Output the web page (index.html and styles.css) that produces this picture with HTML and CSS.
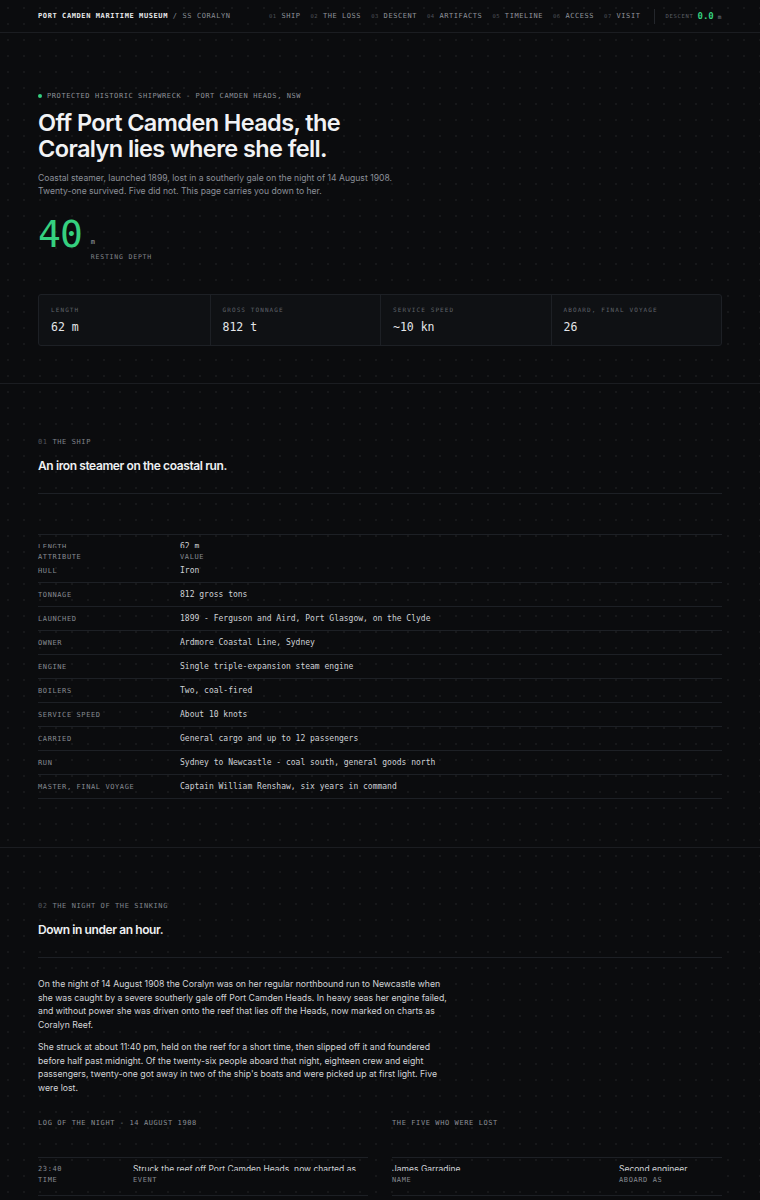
FILE: index.html
```html
<!DOCTYPE html>
<html lang="en">
<head>
    <meta charset="UTF-8">
    <meta name="viewport" content="width=device-width, initial-scale=1.0">
    <title>SS Coralyn - Port Camden Maritime Museum</title>
    <link rel="stylesheet" href="styles.css">
</head>
<body>
    <!-- Barra superior -->
    <header class="topbar">
        <div class="brand"><b>PORT CAMDEN MARITIME MUSEUM</b> / SS CORALYN</div>
        <nav class="links">
            <a href="#ship"><i>01</i> SHIP</a>
            <a href="#loss"><i>02</i> THE LOSS</a>
            <a href="#descent"><i>03</i> DESCENT</a>
            <a href="#artifacts"><i>04</i> ARTIFACTS</a>
            <a href="#timeline"><i>05</i> TIMELINE</a>
            <a href="#access"><i>06</i> ACCESS</a>
            <a href="#visit"><i>07</i> VISIT</a>
            <div class="gauge"><span>DESCENT</span> <strong>0.0</strong> <em>m</em></div>
        </nav>
    </header>

    <!-- Hero -->
    <section class="hero">
        <p class="tag"><span class="dot"></span>PROTECTED HISTORIC SHIPWRECK - PORT CAMDEN HEADS, NSW</p>
        <h1>Off Port Camden Heads, the<br>Coralyn lies where she fell.</h1>
        <p class="lede">Coastal steamer, launched 1899, lost in a southerly gale on the night of 14 August 1908.<br>Twenty-one survived. Five did not. This page carries you down to her.</p>

        <div class="depth">
            <div class="depth-num">40</div>
            <div class="depth-unit">
                <span>m</span>
                <small>RESTING DEPTH</small>
            </div>
        </div>

        <div class="stats">
            <div class="stat"><small>LENGTH</small><span>62 m</span></div>
            <div class="stat"><small>GROSS TONNAGE</small><span>812 t</span></div>
            <div class="stat"><small>SERVICE SPEED</small><span>~10 kn</span></div>
            <div class="stat"><small>ABOARD, FINAL VOYAGE</small><span>26</span></div>
        </div>
    </section>

    <!-- 01 El barco -->
    <section class="block" id="ship">
        <p class="kicker"><i>01</i> THE SHIP</p>
        <h2>An iron steamer on the coastal run.</h2>

        <div class="sheet spec">
            <div class="sheet-head"><span>ATTRIBUTE</span><span>VALUE</span></div>
            <div class="sheet-row"><span>LENGTH</span><span>62 m</span></div>
            <div class="sheet-row"><span>HULL</span><span>Iron</span></div>
            <div class="sheet-row"><span>TONNAGE</span><span>812 gross tons</span></div>
            <div class="sheet-row"><span>LAUNCHED</span><span>1899 - Ferguson and Aird, Port Glasgow, on the Clyde</span></div>
            <div class="sheet-row"><span>OWNER</span><span>Ardmore Coastal Line, Sydney</span></div>
            <div class="sheet-row"><span>ENGINE</span><span>Single triple-expansion steam engine</span></div>
            <div class="sheet-row"><span>BOILERS</span><span>Two, coal-fired</span></div>
            <div class="sheet-row"><span>SERVICE SPEED</span><span>About 10 knots</span></div>
            <div class="sheet-row"><span>CARRIED</span><span>General cargo and up to 12 passengers</span></div>
            <div class="sheet-row"><span>RUN</span><span>Sydney to Newcastle - coal south, general goods north</span></div>
            <div class="sheet-row"><span>MASTER, FINAL VOYAGE</span><span>Captain William Renshaw, six years in command</span></div>
        </div>
    </section>

    <!-- 02 La noche del hundimiento -->
    <section class="block" id="loss">
        <p class="kicker"><i>02</i> THE NIGHT OF THE SINKING</p>
        <h2>Down in under an hour.</h2>

        <div class="story">
            <p>On the night of 14 August 1908 the Coralyn was on her regular northbound run to Newcastle when she was caught by a severe southerly gale off Port Camden Heads. In heavy seas her engine failed, and without power she was driven onto the reef that lies off the Heads, now marked on charts as Coralyn Reef.</p>
            <p>She struck at about 11:40 pm, held on the reef for a short time, then slipped off it and foundered before half past midnight. Of the twenty-six people aboard that night, eighteen crew and eight passengers, twenty-one got away in two of the ship's boats and were picked up at first light. Five were lost.</p>
        </div>

        <div class="pair">
            <div>
                <p class="caption">LOG OF THE NIGHT - 14 AUGUST 1908</p>
                <div class="sheet log">
                    <div class="sheet-head"><span>TIME</span><span>EVENT</span></div>
                    <div class="sheet-row"><span>23:40</span><span>Struck the reef off Port Camden Heads, now charted as Coralyn Reef.</span></div>
                </div>
            </div>
            <div>
                <p class="caption">THE FIVE WHO WERE LOST</p>
                <div class="sheet lost">
                    <div class="sheet-head"><span>NAME</span><span>ABOARD AS</span></div>
                    <div class="sheet-row"><span>James Garradine</span><span>Second engineer</span></div>
                </div>
            </div>
        </div>
    </section>
</body>
</html>
```

FILE: styles.css
```css
body {
    margin: 0;
    background-color: #0b0c0e;
    background-image: radial-gradient(rgba(255, 255, 255, 0.05) 1px, transparent 1.2px);
    background-size: 16px 16px;
    color: #e6e7ea;
    font-family: Inter, "Noto Sans", sans-serif;
}
i, em {
    font-style: normal;
}
p {
    margin: 0;
}

/* barra superior */
.topbar {
    height: 32px;
    padding: 0 38px;
    display: flex;
    align-items: center;
    justify-content: space-between;
    border-bottom: 1px solid #1b1d21;
    font-family: "DejaVu Sans Mono", monospace;
    font-size: 7px;
    letter-spacing: 0.6px;
    color: #8a8e95;
}
.brand b {
    color: #e8e9eb;
    font-weight: bold;
}
.links {
    display: flex;
    align-items: center;
    gap: 10px;
}
.links a {
    color: #8f939a;
    text-decoration: none;
    letter-spacing: 0.55px;
}
.links a i {
    font-size: 5.5px;
    color: #4c5057;
}
.gauge {
    margin-left: 4px;
    padding-left: 10px;
    border-left: 1px solid #24272c;
    height: 15px;
    display: flex;
    align-items: center;
    gap: 4px;
}
.gauge span {
    font-size: 5.5px;
    color: #5d6168;
    letter-spacing: 0.7px;
}
.gauge strong {
    font-size: 9px;
    color: #35d07f;
    letter-spacing: 0;
}
.gauge em {
    font-size: 6px;
    color: #7d8188;
}

/* hero */
.hero {
    padding: 59px 38px 37px;
    border-bottom: 1px solid #1b1d21;
}
.tag {
    display: flex;
    align-items: center;
    gap: 5px;
    font-family: "DejaVu Sans Mono", monospace;
    font-size: 7px;
    letter-spacing: 0.58px;
    color: #8d9198;
}
.dot {
    width: 4px;
    height: 4px;
    border-radius: 50%;
    background: #35d07f;
}
h1 {
    margin: 10px 0 0;
    font-size: 23.5px;
    line-height: 26px;
    font-weight: 600;
    letter-spacing: -0.6px;
    color: #f1f2f4;
}
.lede {
    margin-top: 10px;
    font-size: 8.6px;
    line-height: 13px;
    color: #8b9099;
}
.depth {
    margin-top: 16px;
    display: flex;
    align-items: flex-start;
    gap: 9px;
}
.depth-num {
    font-family: "DejaVu Sans Mono", monospace;
    font-size: 38px;
    line-height: 40px;
    letter-spacing: -1px;
    color: #35d07f;
}
.depth-unit {
    display: flex;
    flex-direction: column;
    padding-top: 24px;
    font-family: "DejaVu Sans Mono", monospace;
}
.depth-unit span {
    font-size: 7px;
    color: #a3a7ad;
}
.depth-unit small {
    margin-top: 7px;
    font-size: 6.5px;
    letter-spacing: 0.8px;
    color: #80848b;
}
.stats {
    margin-top: 33px;
    display: grid;
    grid-template-columns: repeat(4, 1fr);
    border: 1px solid #1d2025;
    border-radius: 3px;
    background: #0f1114;
}
.stat {
    padding: 11px 12px 11px;
    display: flex;
    flex-direction: column;
    gap: 7px;
    font-family: "DejaVu Sans Mono", monospace;
}
.stat + .stat {
    border-left: 1px solid #1d2025;
}
.stat small {
    font-size: 6px;
    letter-spacing: 1.1px;
    color: #5f636a;
}
.stat span {
    font-size: 11.5px;
    color: #e4e6e9;
}

/* secciones */
.block {
    padding: 54px 38px 48px;
    border-bottom: 1px solid #1b1d21;
}
.kicker {
    font-family: "DejaVu Sans Mono", monospace;
    font-size: 7px;
    letter-spacing: 0.6px;
    color: #7f838a;
}
.kicker i {
    color: #4f535a;
}
h2 {
    margin: 12px 0 0;
    padding-bottom: 19px;
    border-bottom: 1px solid #1d2025;
    font-size: 12px;
    line-height: 16px;
    font-weight: 600;
    letter-spacing: -0.4px;
    color: #eef0f2;
}

/* tablas */
.sheet {
    position: relative;
    border-top: 1px solid #1d2025;
    font-family: "DejaVu Sans Mono", monospace;
}
.spec {
    margin-top: 40px;
}
.sheet-row,
.sheet-head {
    display: grid;
    grid-template-columns: 142px 1fr;
    align-items: center;
}
.sheet-row {
    height: 23px;
    border-bottom: 1px solid #1d2025;
}
.sheet-row span:first-child {
    font-size: 7px;
    letter-spacing: 0.6px;
    color: #868a91;
}
.sheet-row span:last-child {
    font-size: 8px;
    color: #cfd2d6;
}
/* cabecera encima de la primera fila */
.sheet-head {
    position: absolute;
    top: 13px;
    left: 0;
    right: 0;
    height: 18px;
    background: #0b0c0e;
    font-size: 7px;
    letter-spacing: 0.6px;
    color: #868a91;
}

.story {
    margin-top: 20px;
    max-width: 410px;
    font-size: 8.7px;
    line-height: 13.7px;
    color: #d3d5d9;
}
.story p + p {
    margin-top: 8px;
}
.pair {
    margin-top: 23px;
    display: grid;
    grid-template-columns: 1fr 1fr;
    gap: 24px;
}
.caption {
    font-family: "DejaVu Sans Mono", monospace;
    font-size: 7px;
    letter-spacing: 0.6px;
    color: #8a8e95;
    margin-bottom: 30px;
}
.log .sheet-row,
.log .sheet-head {
    grid-template-columns: 95px 1fr;
}
.lost .sheet-row,
.lost .sheet-head {
    grid-template-columns: 227px 1fr;
}
.log .sheet-row,
.lost .sheet-row {
    height: auto;
    min-height: 31px;
    padding: 5px 0 1px;
    align-items: start;
}
.log .sheet-row span:last-child,
.lost .sheet-row span {
    font-family: Inter, sans-serif;
    font-size: 8.5px;
    line-height: 13px;
    letter-spacing: 0;
    color: #cfd2d6;
    padding-right: 4px;
}
.log .sheet-row span:first-child {
    line-height: 13px;
}
```
